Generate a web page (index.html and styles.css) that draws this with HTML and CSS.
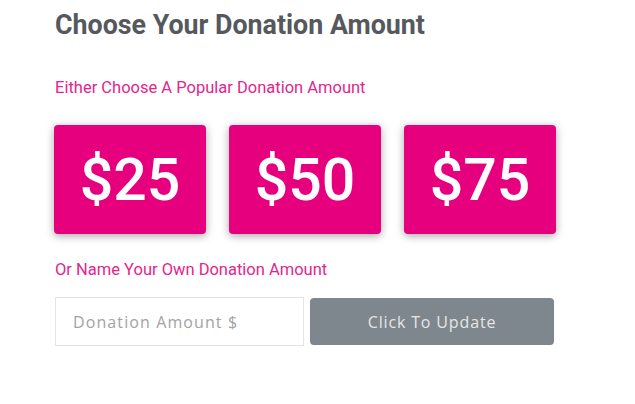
FILE: index.html
```html
<!DOCTYPE html>
<html>
<head>
<meta charset="utf-8">
<link rel="stylesheet" href="styles.css">
</head>
<body>
<div class="donate">
  <h1 class="title">Choose Your Donation Amount</h1>
  <p class="label label-first">Either Choose A Popular Donation Amount</p>
  <div class="amounts">
    <button class="amount">$25</button>
    <button class="amount">$50</button>
    <button class="amount">$75</button>
  </div>
  <p class="label label-second">Or Name Your Own Donation Amount</p>
  <div class="custom">
    <input class="custom-input" type="text" placeholder="Donation Amount $">
    <button class="custom-btn">Click To Update</button>
  </div>
</div>
</body>
</html>
```
FILE: styles.css
```css
html, body {
  margin: 0;
  padding: 0;
  background: #ffffff;
}
.donate {
  padding: 9px 0 0 55px;
  font-family: Roboto, "Liberation Sans", sans-serif;
}
.title {
  margin: 0;
  font-size: 26.8px;
  line-height: 32px;
  font-weight: 700;
  color: #55595d;
}
.label {
  margin: 0;
  font-size: 16.5px;
  line-height: 19px;
  font-weight: 400;
  color: #e3268c;
}
.label-first {
  margin-top: 37px;
}
.amounts {
  display: flex;
  gap: 23px;
  margin-top: 28px;
  margin-left: -1px;
}
.amount {
  width: 152px;
  height: 109px;
  border: none;
  border-radius: 4px;
  background: #e6007e;
  color: #ffffff;
  font-family: Roboto, "Liberation Sans", sans-serif;
  font-size: 59px;
  font-weight: 500;
  padding: 0;
  box-shadow: 0 2px 8px rgba(0, 0, 0, 0.35);
}
.label-second {
  margin-top: 26px;
}
.custom {
  display: flex;
  align-items: flex-start;
  gap: 6px;
  margin-top: 18px;
}
.custom-input {
  box-sizing: border-box;
  width: 249px;
  height: 49px;
  margin: 0;
  border: 1px solid #e4e4e4;
  padding: 0 0 0 17px;
  font-family: "Open Sans", sans-serif;
  font-size: 16px;
  letter-spacing: 1.1px;
  color: #555;
  outline: none;
}
.custom-input::placeholder {
  color: #a3a3a3;
}
.custom-btn {
  box-sizing: border-box;
  width: 244px;
  height: 47px;
  margin-top: 1px;
  border: none;
  border-radius: 4px;
  background: #7e878e;
  color: #e6e6e6;
  font-family: "Open Sans", sans-serif;
  font-size: 16px;
  letter-spacing: 0.85px;
  padding: 0;
}
```
